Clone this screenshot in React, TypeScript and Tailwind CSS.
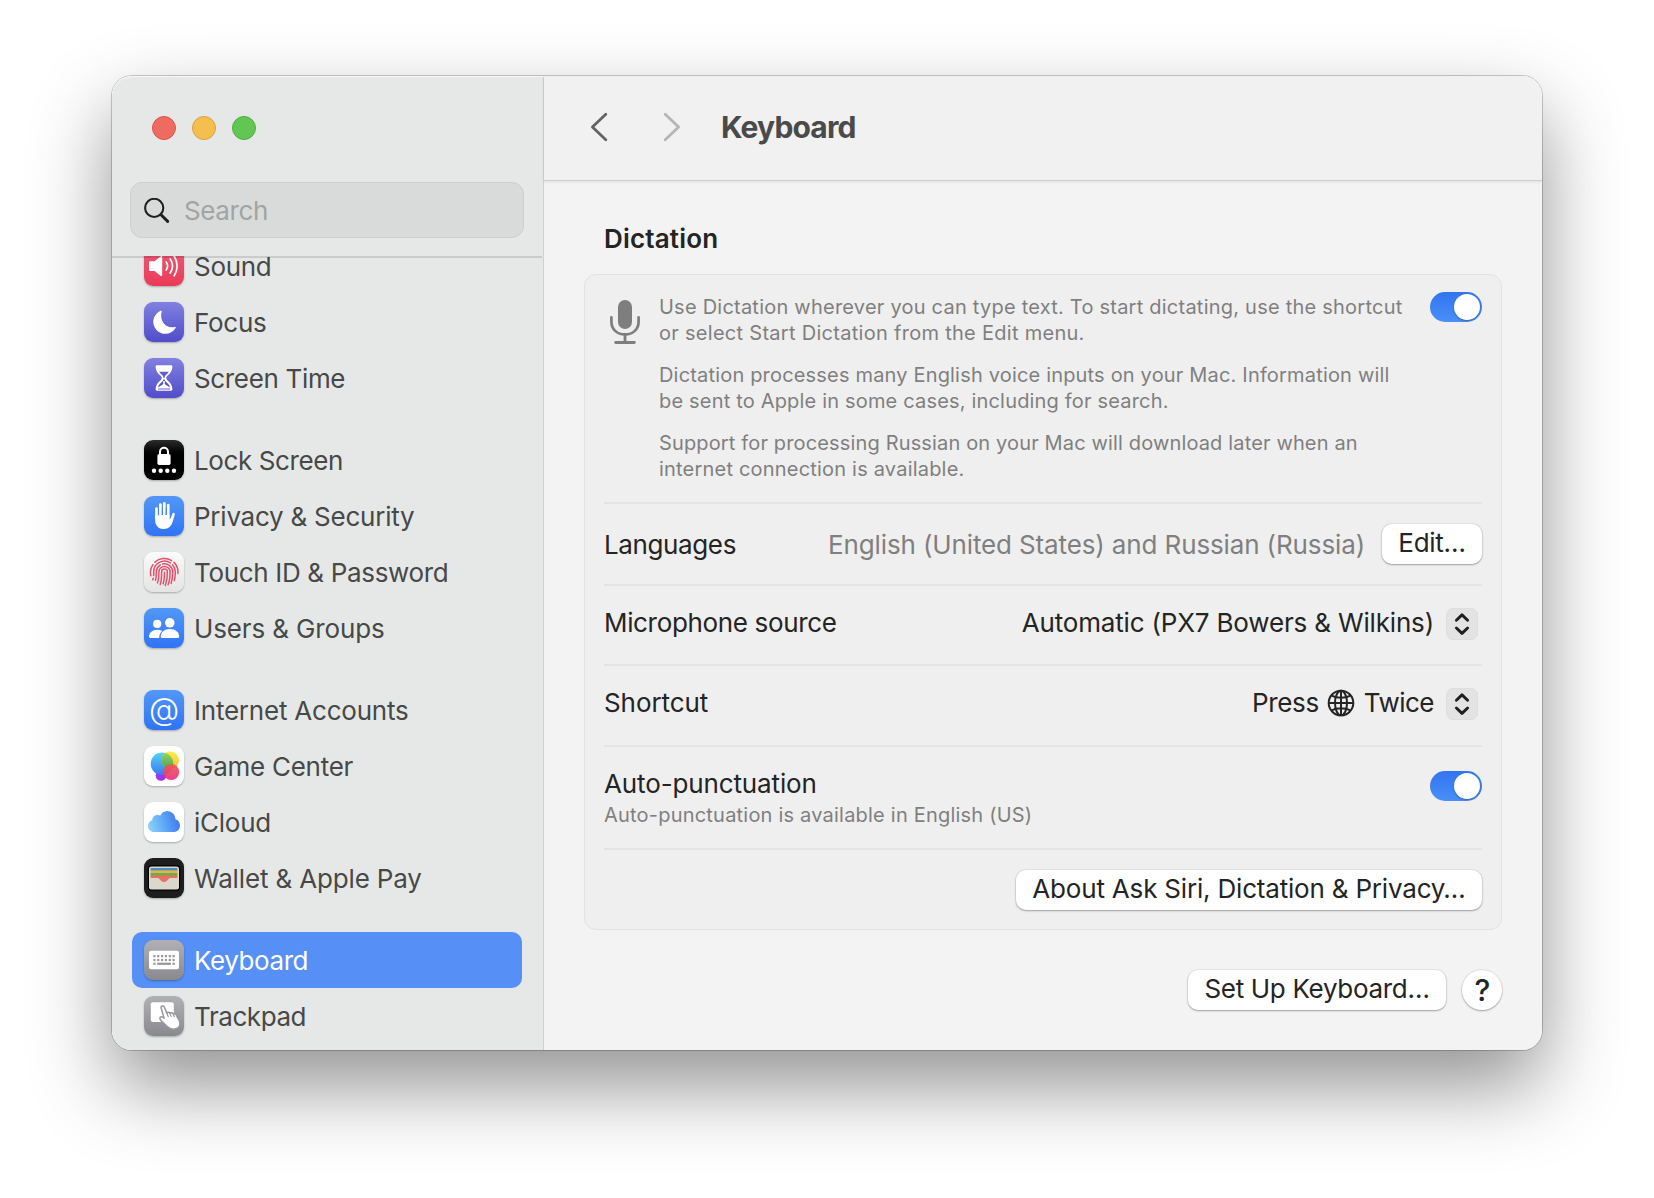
import React from 'react';

type Item = { label: string; tracking: string; icon: React.ReactNode; tile: string; active?: boolean };

const BLUE_TILE = 'bg-linear-to-b from-[#5297f6] to-[#3173f5]';
const INDIGO_TILE = 'bg-linear-to-b from-[#8280e0] to-[#514cc9]';
const GRAY_TILE = 'bg-linear-to-b from-[#b1b0b5] to-[#8a898d]';

function Glyph({ children }: { children: React.ReactNode }) {
  return (
    <svg viewBox="0 0 40 40" className="size-10" fill="none">
      {children}
    </svg>
  );
}

const SoundIcon = () => (
  <Glyph>
    <path d="M6 15.3h4.6l6.2-5c.7-.5 1.4-.2 1.4.6v18.4c0 .8-.7 1.1-1.4.6l-6.2-5H6a1 1 0 0 1-1-1v-7.6a1 1 0 0 1 1-1z" fill="#fff" />
    <g stroke="#fff" strokeWidth="1.7" strokeLinecap="round">
      <path d="M22.2 16a7 7 0 0 1 0 8" />
      <path d="M26.2 13a12.500 12.500 0 0 1 0 14" />
      <path d="M30.200 10.200a18 18 0 0 1 0 19.600" />
    </g>
  </Glyph>
);

const MoonIcon = () => (
  <Glyph>
    <path d="M16.600 8.800c.6-.4 1.300 0 1.100.7-2.500 8.800 3.500 17.300 13 15.400.8-.2 1.300.4.900 1.100A12 12 0 1 1 16.600 8.800z" fill="#fff" />
  </Glyph>
);

const HourglassIcon = () => (
  <Glyph>
    <path d="M13 7.300h14c.9 0 1.500.7 1.400 1.600-.3 3.500-1.600 6-4.400 8.300-1 .8-1.700 1.600-1.700 2.800s.7 2 1.700 2.800c2.800 2.300 4.100 4.800 4.400 8.300.1.900-.5 1.600-1.400 1.600H13c-.9 0-1.500-.7-1.400-1.600.3-3.500 1.600-6 4.400-8.300 1-.8 1.700-1.600 1.700-2.800s-.7-2-1.700-2.800c-2.800-2.300-4.100-4.800-4.400-8.300-.1-.9.500-1.600 1.400-1.600z" fill="#fff" />
    <path d="M15.300 13.700h9.400c-.7 1.400-1.600 2.200-2.600 3-1.200 1-1.500 2-1.500 3.300h-1.200c0-1.300-.3-2.300-1.500-3.300-1-.8-1.900-1.600-2.600-3z" fill="#605cd0" />
    <path d="M19.400 21.500h1.200c.2 1 .8 2 1.800 2.700 2 1.500 3.200 3.100 3.700 5.400-1.500-1.600-4-2.400-5.300-3.700v-3h-1.600v3c-1.300 1.300-3.800 2.100-5.300 3.700.5-2.300 1.700-3.900 3.700-5.400 1-.7 1.600-1.700 1.800-2.700z" fill="#5551cb" />
    <path d="M14 31h12" stroke="#5551cb" strokeWidth=".9" />
  </Glyph>
);

const LockIcon = () => (
  <Glyph>
    <path d="M16 15v-3.200a4 4 0 0 1 8 0V15" stroke="#fff" strokeWidth="2" />
    <rect x="13.400" y="14" width="13.200" height="11" rx="1.800" fill="#fff" />
    {[10, 16.700, 23.300, 30].map((x) => (
      <circle key={x} cx={x} cy="30.700" r="2.200" fill="#fff" />
    ))}
  </Glyph>
);

const HandIcon = () => (
  <Glyph>
    <g stroke="#fff" strokeWidth="2.700" strokeLinecap="round">
      <path d="M12.500 12.500V22M16.400 8.500V21M20.300 7.400V21M24.200 9.200V21" />
    </g>
    <path d="M11.150 19h14.400v4.200c.7-.3 1.300-1.300 1.900-3l.8-2.300c.3-.9.900-1.300 1.600-1.100.8.200 1.100.9.900 1.800l-1.800 6.400c-1.500 5.200-4.300 8-9.200 8-5.300 0-8.600-3.400-8.600-9z" fill="#fff" />
    <g stroke="#4384f6" strokeWidth="1" strokeLinecap="round">
      <path d="M14.450 13v6M18.350 12v6.500M22.250 12v6.500" />
    </g>
  </Glyph>
);

const FingerprintIcon = () => (
  <Glyph>
    <g stroke="#e2506a" strokeWidth="1.500" strokeLinecap="round">
      <path d="M10.800 10.300A13.500 13.500 0 0 1 27.600 8.600M30 10.400A13.500 13.500 0 0 1 33.900 21.500M9 12.600A13.500 13.500 0 0 0 6.900 23.800" />
      <path d="M9.600 23.600c.2-1.200.1-2.400.1-3.600a10.800 10.800 0 0 1 16.800-9M28.500 12.700a10.800 10.800 0 0 1 2.800 7.300c0 3.600-.2 5.800-1 8.600M9.200 26.300l-.5 1.500" />
      <path d="M11.400 28.300c.9-2.700.9-5.400.9-8.300a8.200 8.200 0 0 1 4-7M18.600 12a8.200 8.200 0 0 1 10.100 8c0 4.400-.4 8-1.600 11.400" />
      <path d="M13.400 30.900c1.500-3.700 1.500-6.900 1.500-10.900a5.600 5.600 0 0 1 11.200 0c0 4.900-.4 8.900-2 12.800" />
      <path d="M16.200 32.500c1.300-3.900 1.400-7.800 1.400-12.500a2.900 2.900 0 0 1 5.800 0c0 5-.5 9.300-2.100 13.400" />
      <path d="M20.500 20.200c0 4.300-.2 7.800-1.300 11.500" />
    </g>
  </Glyph>
);

const UsersIcon = () => (
  <Glyph>
    <circle cx="13.200" cy="15.900" r="4.100" fill="#fff" />
    <path d="M5 28.600c0-3.900 3.400-6.900 8.200-6.900 2 0 3.700.5 5 1.400-1.900 1.600-3 3.900-3 6.900H6.300c-.9 0-1.300-.5-1.300-1.400z" fill="#fff" />
    <circle cx="25.800" cy="14.800" r="4.800" fill="#fff" />
    <path d="M16.700 28.600c0-4.300 3.700-7.700 9.200-7.700s9.300 3.400 9.300 7.700c0 .9-.4 1.400-1.400 1.400H18c-.9 0-1.300-.5-1.300-1.400z" fill="#fff" />
  </Glyph>
);

const GameCenterIcon = () => (
  <Glyph>
    <defs>
      <linearGradient id="gc-blue" x1="0" y1="0" x2="0" y2="1">
        <stop offset="0" stopColor="#55d3f4" />
        <stop offset="1" stopColor="#3a78f0" />
      </linearGradient>
      <linearGradient id="gc-yellow" x1="0" y1="0" x2="0" y2="1">
        <stop offset="0" stopColor="#fdf04a" />
        <stop offset="1" stopColor="#f5b83c" />
      </linearGradient>
      <linearGradient id="gc-red" x1="0" y1="0" x2="0" y2="1">
        <stop offset="0" stopColor="#ee5a4a" />
        <stop offset="1" stopColor="#ee2c86" />
      </linearGradient>
      <linearGradient id="gc-green" x1="0" y1="0" x2="0" y2="1">
        <stop offset="0" stopColor="#a5d55a" />
        <stop offset="1" stopColor="#3fa85c" />
      </linearGradient>
      <clipPath id="gc-clip">
        <circle cx="18" cy="17.700" r="11.300" />
      </clipPath>
    </defs>
    <circle cx="17" cy="29.500" r="5.300" fill="#9a35f0" />
    <circle cx="18" cy="17.700" r="11.300" fill="url(#gc-blue)" />
    <circle cx="26" cy="14.200" r="8.900" fill="url(#gc-yellow)" />
    <circle cx="26" cy="14.200" r="8.900" fill="url(#gc-green)" clipPath="url(#gc-clip)" />
    <circle cx="27.200" cy="26" r="8" fill="url(#gc-red)" fillOpacity=".92" />
  </Glyph>
);

const CloudIcon = () => (
  <Glyph>
    <defs>
      <linearGradient id="cloud-fill" x1="0" y1=".6" x2="1" y2=".4">
        <stop offset="0" stopColor="#8fd0f9" />
        <stop offset=".45" stopColor="#5eacf6" />
        <stop offset="1" stopColor="#3f74ec" />
      </linearGradient>
    </defs>
    <path d="M10.500 30C6.800 30 4 27.300 4 23.900c0-2.700 1.700-4.900 4.200-5.700.2-3 2.400-5.200 5.300-5.200 1 0 1.900.2 2.700.7A8.300 8.300 0 0 1 23 9c4.700 0 8.300 3.600 8.400 8.300 2.700.7 4.600 3.100 4.600 6.100 0 3.700-2.800 6.600-6.500 6.600z" fill="url(#cloud-fill)" />
  </Glyph>
);

const WalletIcon = () => (
  <Glyph>
    <rect x="3.800" y="7.300" width="32.400" height="25.400" rx="3.400" fill="#000" />
    <rect x="5" y="8.500" width="30" height="23" rx="2.300" fill="#dbd7cd" />
    <rect x="6.600" y="10" width="26.800" height="3" rx=".8" fill="#4590c6" />
    <rect x="6.600" y="12.400" width="26.800" height="3" fill="#eeb041" />
    <rect x="6.600" y="15" width="26.800" height="3" fill="#63b050" />
    <path d="M6.600 17.600h26.800V20H27c-1.700 0-2.300.5-3 1.600-.9 1.500-2.300 2.400-4 2.400s-3.100-.9-4-2.400c-.7-1.100-1.300-1.600-3-1.600H6.600z" fill="#e8705e" />
  </Glyph>
);

const KeyboardIcon = () => (
  <Glyph>
    <rect x="5" y="10.800" width="30" height="18.400" rx="2.200" fill="#fff" />
    {[15, 18.900].map((y) =>
      [9.300, 13.150, 17, 20.850, 24.700, 28.550].map((x) => (
        <rect key={`${x}-${y}`} x={x} y={y} width="2.200" height="2.200" fill="#98979b" />
      )),
    )}
    <rect x="9.300" y="22.700" width="2.200" height="2.200" fill="#98979b" />
    <rect x="13.150" y="22.700" width="13.750" height="2.200" fill="#98979b" />
    <rect x="28.550" y="22.700" width="2.200" height="2.200" fill="#98979b" />
  </Glyph>
);

const TrackpadIcon = () => (
  <Glyph>
    <rect x="6.800" y="6.300" width="23" height="19.700" rx="2" fill="#fff" />
    <path d="M17.100 11.800c-.5-1.600 2.400-2.700 3.200-.8l2.500 6.200c.6-1.500 2.900-1.200 3.200.2.900-1.200 3-.8 3.300.8 1-.9 2.900-.3 3.100 1.200l2.800 5.100c1.500 4 .3 6.700-2.800 8-3.300 1.300-6.200.7-9.100-1.900l-6-5.700c-1.500-1.600-1.900-2.600-1-3.600.9-.9 2.400-.4 3.800 1z" fill="#fff" stroke="#98979b" strokeWidth="1.500" strokeLinejoin="round" />
    <path d="M22.800 17.200l1.400 3.400M26 17.400l1.200 3M29.300 18.200l1 2.600" stroke="#98979b" strokeWidth="1.200" strokeLinecap="round" />
  </Glyph>
);

const GROUPS: Item[][] = [
  [
    { label: 'Sound', tracking: 'tracking-[-0.3px]', tile: 'bg-linear-to-b from-[#ea5a7a] to-[#ea3a55]', icon: <SoundIcon /> },
    { label: 'Focus', tracking: 'tracking-[-0.28px]', tile: INDIGO_TILE, icon: <MoonIcon /> },
    { label: 'Screen Time', tracking: 'tracking-[-0.34px]', tile: INDIGO_TILE, icon: <HourglassIcon /> },
  ],
  [
    { label: 'Lock Screen', tracking: 'tracking-[-0.4px]', tile: 'bg-linear-to-b from-[#2c2c2c] to-[#000000] to-50%', icon: <LockIcon /> },
    { label: 'Privacy & Security', tracking: 'tracking-[-0.24px]', tile: BLUE_TILE, icon: <HandIcon /> },
    { label: 'Touch ID & Password', tracking: 'tracking-[-0.33px]', tile: 'bg-linear-to-b from-[#fbfbfb] to-[#e4e4e4]', icon: <FingerprintIcon /> },
    { label: 'Users & Groups', tracking: 'tracking-[-0.14px]', tile: BLUE_TILE, icon: <UsersIcon /> },
  ],
  [
    { label: 'Internet Accounts', tracking: 'tracking-[-0.22px]', tile: BLUE_TILE, icon: <span className="pb-0.5 text-[31px] leading-[36px] font-light text-white">@</span> },
    { label: 'Game Center', tracking: 'tracking-[-0.26px]', tile: 'bg-white', icon: <GameCenterIcon /> },
    { label: 'iCloud', tracking: 'tracking-[-0.25px]', tile: 'bg-white', icon: <CloudIcon /> },
    { label: 'Wallet & Apple Pay', tracking: 'tracking-[-0.15px]', tile: 'bg-[#1d1d1d]', icon: <WalletIcon /> },
  ],
  [
    { label: 'Keyboard', tracking: 'tracking-[-0.42px]', tile: GRAY_TILE, icon: <KeyboardIcon />, active: true },
    { label: 'Trackpad', tracking: 'tracking-[-0.43px]', tile: GRAY_TILE, icon: <TrackpadIcon /> },
  ],
];

function SidebarRow({ item }: { item: Item }) {
  return (
    <a
      className={`flex h-14 gap-2.5 rounded-[10px] px-3 ${item.active ? 'bg-[#568ff5] text-white' : 'text-[#474848]'}`}
    >
      <span
        className={`mt-2 flex size-10 shrink-0 items-center justify-center overflow-hidden rounded-[9px] shadow-[0_1px_2px_rgba(0,0,0,0.28)] ${item.tile}`}
      >
        {item.icon}
      </span>
      <span className={`pt-[13px] text-[26px] leading-[31px] whitespace-nowrap ${item.tracking}`}>{item.label}</span>
    </a>
  );
}

function Sidebar() {
  return (
    <aside className="flex w-[432px] shrink-0 flex-col border-r border-[#cfd0d0] bg-[#e6e8e7]">
      <div className="flex h-[180px] shrink-0 flex-col px-[18px]">
        <div className="flex gap-4 pt-10 pl-[22px]">
          <span className="size-6 rounded-full border border-[#d9544b] bg-[#ed6b60]" />
          <span className="size-6 rounded-full border border-[#dba03c] bg-[#f5bf4f]" />
          <span className="size-6 rounded-full border border-[#4fad41] bg-[#62c655]" />
        </div>
        <div className="mt-[42px] flex h-14 w-[394px] rounded-xl border border-[#cdcfce] bg-[#d9dbda] pl-[13px]">
          <svg viewBox="0 0 26 26" className="mt-[15px] size-[26px]" fill="none" stroke="#1f2020" strokeLinecap="round">
            <circle cx="10.200" cy="9.900" r="9.100" strokeWidth="2.100" />
            <path d="M17 16.700l6.700 6.700" strokeWidth="2.900" />
          </svg>
          <span className="pt-3 pl-[14px] text-[26px] leading-[31px] tracking-[-0.36px] text-[#a2a4a3]">Search</span>
        </div>
      </div>
      <div className="relative min-h-0 flex-1 overflow-hidden">
        <div className="absolute top-0 right-px left-0 z-10 h-0.5 bg-black/12" />
        <nav className="-mt-[18px] flex flex-col gap-[26px] pr-[21px] pl-5">
          {GROUPS.map((group, i) => (
            <div key={i} className="flex flex-col">
              {group.map((item) => (
                <SidebarRow key={item.label} item={item} />
              ))}
            </div>
          ))}
        </nav>
      </div>
    </aside>
  );
}

function Toggle({ className = '' }: { className?: string }) {
  return (
    <button
      className={`flex h-[30px] w-[52px] shrink-0 items-center justify-end rounded-full bg-linear-to-b from-[#3274f0] to-[#4a8ff7] pr-0.5 ${className}`}
    >
      <span className="size-[26px] rounded-full bg-white shadow-[0_1px_2px_rgba(0,0,0,0.3)]" />
    </button>
  );
}

function PushButton({ children, className = '' }: { children: React.ReactNode; className?: string }) {
  return (
    <button
      className={`flex h-10 shrink-0 justify-center rounded-[10px] bg-white pt-[3px] text-[26px] leading-[31px] whitespace-nowrap shadow-[0_0_0_1px_rgba(0,0,0,0.05),0_1px_2px_rgba(0,0,0,0.3)] ${className}`}
    >
      {children}
    </button>
  );
}

function Stepper() {
  return (
    <span className="mt-[22px] mr-1 ml-3 flex size-8 shrink-0 items-center justify-center rounded-[7px] border border-[#dedede] bg-[#e3e3e3]">
      <svg viewBox="0 0 32 32" className="size-8 shrink-0" fill="none" stroke="#1f1f1f" strokeWidth="2.900" strokeLinecap="round" strokeLinejoin="round">
        <path d="M10.400 12.300L16 6.900l5.600 5.400M10.400 20L16 25.400l5.600-5.400" />
      </svg>
    </span>
  );
}

function GlobeIcon() {
  return (
    <svg viewBox="0 0 28 28" className="mr-[9px] ml-2 mt-[23px] size-7 shrink-0" fill="none" stroke="#242424" strokeWidth="2">
      <circle cx="14" cy="14" r="12.300" />
      <ellipse cx="14" cy="14" rx="6" ry="12.300" />
      <path d="M14 1.700v24.600M1.700 14h24.600M4.600 6.700c5.200 2.800 13.600 2.800 18.800 0M4.600 21.300c5.200-2.800 13.600-2.800 18.800 0" />
    </svg>
  );
}

function MicIcon() {
  return (
    <svg viewBox="0 0 30 44" className="ml-1.5 mt-[25px] h-11 w-[30px] shrink-0" fill="none" stroke="#7e7e7e" strokeLinecap="round">
      <rect x="8" y="0" width="14" height="29" rx="7" fill="#7e7e7e" stroke="none" />
      <path d="M1.400 17.300v4.400C1.400 29.200 7 34.400 15 34.400s13.600-5.200 13.600-12.700v-4.400" strokeWidth="2.700" />
      <path d="M15 35v7" strokeWidth="2.800" />
      <path d="M5.700 42.500h18.600" strokeWidth="2.900" />
    </svg>
  );
}

const Divider = () => <div className="h-0.5 shrink-0 bg-[#e4e4e4]" />;

const LABEL = 'text-[26px] leading-[31px] whitespace-nowrap';

function DictationCard() {
  return (
    <section className="mt-5 flex h-[656px] w-[918px] flex-col rounded-xl border border-[#e2e2e2] bg-[#efefef] px-[19px]">
      <div className="flex h-[227px] shrink-0">
        <MicIcon />
        <div className="flex flex-1 flex-col gap-4 pt-[19px] pl-[19px] text-[20px] leading-[26px] whitespace-nowrap text-[#7f7f7f]">
          <p>
            <span className="block tracking-[0.23px]">Use Dictation wherever you can type text. To start dictating, use the shortcut</span>
            <span className="block tracking-[0.285px]">or select Start Dictation from the Edit menu.</span>
          </p>
          <p>
            <span className="block tracking-[0.178px]">Dictation processes many English voice inputs on your Mac. Information will</span>
            <span className="block tracking-[0.179px]">be sent to Apple in some cases, including for search.</span>
          </p>
          <p>
            <span className="block tracking-[0.146px]">Support for processing Russian on your Mac will download later when an</span>
            <span className="block tracking-[0.2px]">internet connection is available.</span>
          </p>
        </div>
        <Toggle className="mt-[17px]" />
      </div>
      <Divider />
      <div className="flex h-20 shrink-0">
        <span className={`mt-[25px] flex-1 tracking-[-0.38px] ${LABEL}`}>Languages</span>
        <span className={`mt-[25px] mr-[17px] tracking-[-0.13px] text-[#7f7f7f] ${LABEL}`}>English (United States) and Russian (Russia)</span>
        <PushButton className="mt-5 w-[100px] tracking-[-0.3px]">Edit…</PushButton>
      </div>
      <Divider />
      <div className="flex h-[78px] shrink-0">
        <span className={`mt-[21px] flex-1 tracking-[-0.34px] ${LABEL}`}>Microphone source</span>
        <span className={`mt-[21px] tracking-[-0.167px] ${LABEL}`}>Automatic (PX7 Bowers &amp; Wilkins)</span>
        <Stepper />
      </div>
      <Divider />
      <div className="flex h-[79px] shrink-0">
        <span className={`mt-[21px] flex-1 tracking-[-0.08px] ${LABEL}`}>Shortcut</span>
        <span className={`mt-[21px] tracking-[-0.36px] ${LABEL}`}>Press</span>
        <GlobeIcon />
        <span className={`mt-[21px] tracking-[-0.52px] ${LABEL}`}>Twice</span>
        <Stepper />
      </div>
      <Divider />
      <div className="flex h-[101px] shrink-0 justify-between">
        <div className="flex flex-col pt-[21px]">
          <span className={`tracking-[-0.13px] ${LABEL}`}>Auto-punctuation</span>
          <span className="mt-[3px] text-[20px] leading-[26px] tracking-[0.21px] whitespace-nowrap text-[#7f7f7f]">
            Auto-punctuation is available in English (US)
          </span>
        </div>
        <Toggle className="mt-6" />
      </div>
      <Divider />
      <div className="flex justify-end pt-5">
        <PushButton className="w-[466px] tracking-[-0.19px]">About Ask Siri, Dictation &amp; Privacy…</PushButton>
      </div>
    </section>
  );
}

export default function App() {
  return (
    <div className="h-[1198px] w-[1654px] overflow-hidden bg-white pt-[76px] pl-[112px] font-[Inter,sans-serif] text-[#242424]">
      <main className="relative flex h-[974px] w-[1430px] overflow-visible rounded-[20px] shadow-[0_0_0_1px_rgba(0,0,0,0.2),0_36px_80px_rgba(0,0,0,0.43)]">
        <div className="flex h-full w-full overflow-hidden rounded-[20px] bg-[#f3f3f3]">
          <Sidebar />
          <div className="flex min-w-0 flex-1 flex-col">
            <header className="z-10 flex h-[105px] shrink-0 border-b border-[#cecece] bg-[#f1f1f1] pl-[46px] shadow-[0_1px_3px_rgba(0,0,0,0.08)]">
              <svg viewBox="0 0 18 30" className="mt-9 h-[30px] w-[18px]" fill="none" stroke="#646464" strokeWidth="2.800" strokeLinecap="round" strokeLinejoin="round">
                <path d="M15.800 2.200L2.400 15l13.400 12.800" />
              </svg>
              <svg viewBox="0 0 18 30" className="mt-9 ml-[55px] h-[30px] w-[18px]" fill="none" stroke="#b5b5b5" strokeWidth="2.800" strokeLinecap="round" strokeLinejoin="round">
                <path d="M2.200 2.200L15.600 15 2.200 27.800" />
              </svg>
              <h1 className="pt-[33px] pl-10 text-[30px] leading-[36px] font-bold tracking-[-0.82px] text-[#4a4a4a]">Keyboard</h1>
            </header>
            <div className="flex flex-1 flex-col pl-10">
              <h2 className="mt-[42px] pl-5 text-[26px] leading-[31px] font-semibold tracking-[0.178px]">Dictation</h2>
              <DictationCard />
              <footer className="mt-10 flex w-[918px] justify-end gap-4">
                <PushButton className="w-[258px] tracking-[-0.32px]">Set Up Keyboard…</PushButton>
                <button className="flex size-10 justify-center rounded-full bg-white pt-0.5 pl-px text-[30px] leading-[36px] font-medium shadow-[0_0_0_1px_rgba(0,0,0,0.05),0_1px_2px_rgba(0,0,0,0.3)]">
                  ?
                </button>
              </footer>
            </div>
          </div>
        </div>
        <div className="pointer-events-none absolute inset-0 rounded-[20px] shadow-[inset_0_1px_1px_rgba(255,255,255,0.7)]" />
      </main>
    </div>
  );
}
